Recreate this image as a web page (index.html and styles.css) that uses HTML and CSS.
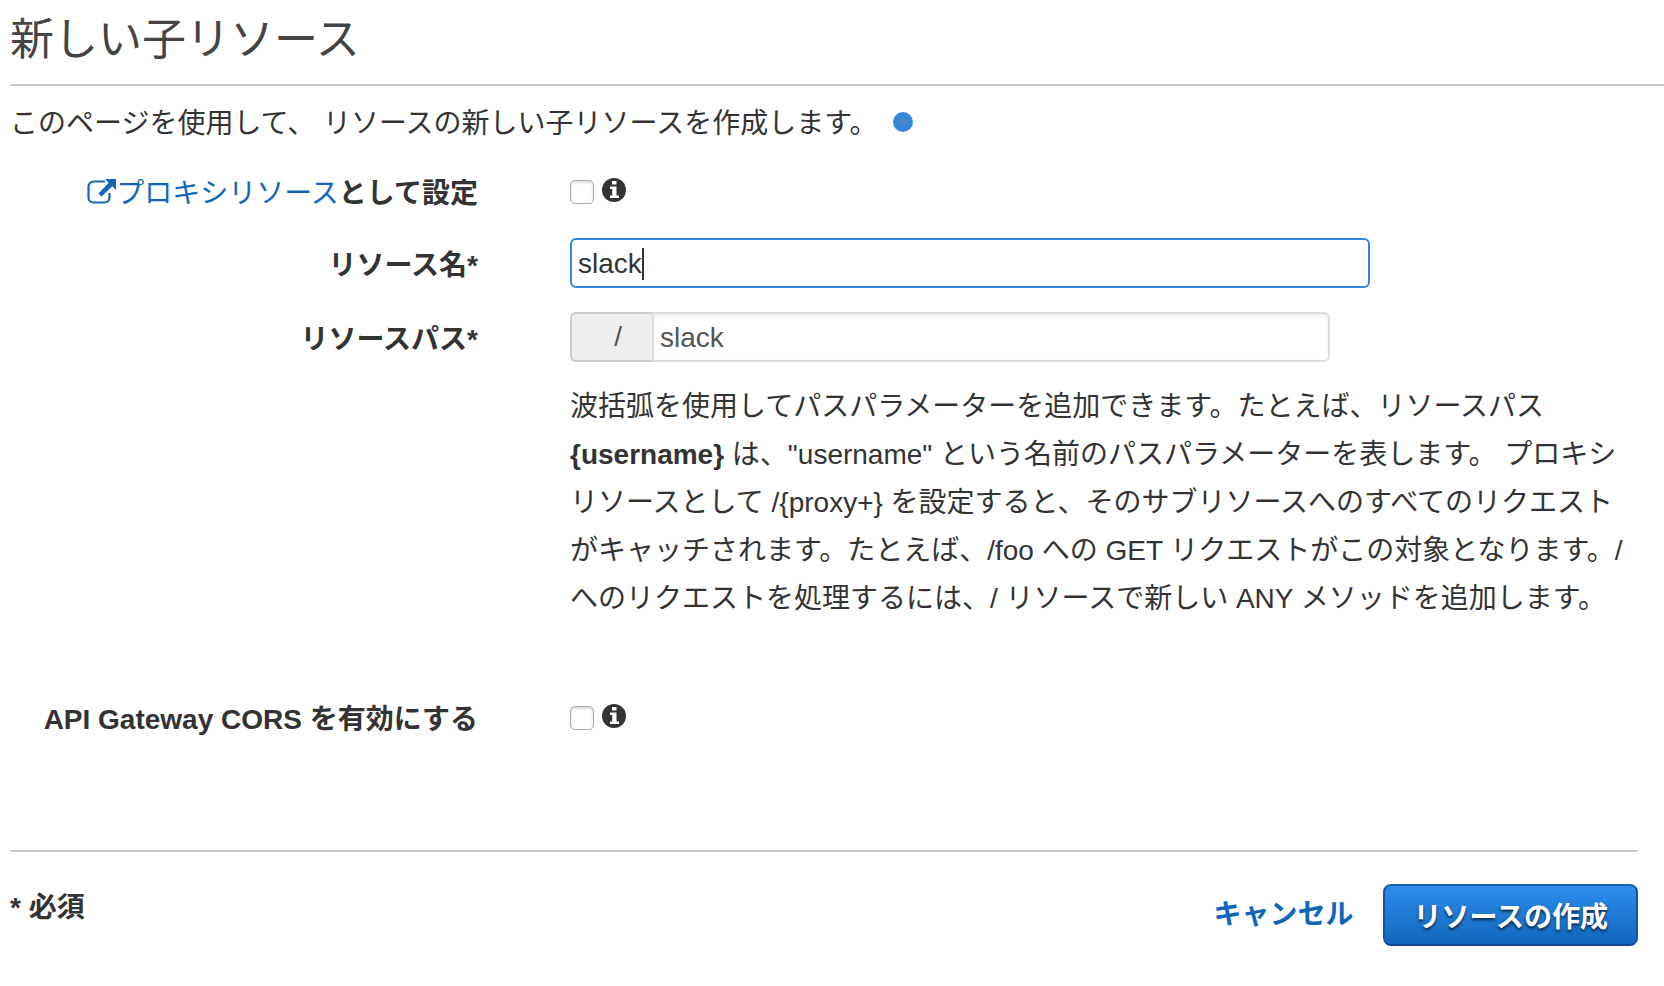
FILE: index.html
```html
<!DOCTYPE html>
<html lang="ja">

<head>
  <meta charset="UTF-8">
  <meta name="viewport" content="width=device-width, initial-scale=1.0">
  <title>新しい子リソース</title>
  <link rel="stylesheet" href="styles.css">
</head>

<body>

  <div class="container">
    <h1 class="title">新しい子リソース</h1>
    <p class="intro">このページを使用して、 リソースの新しい子リソースを作成します。 <span class="dot"></span></p>

    <form class="resource-form">
      <div class="row">
        <div class="row-label">
          <a href="#" class="link"><svg class="icon-link" viewBox="0 0 29 26"><path d="M18 3.500H6.500a5 5 0 0 0-5 5v11a5 5 0 0 0 5 5h11a5 5 0 0 0 5-5V15" fill="none" stroke="currentColor" stroke-width="2.200"/><path d="M18 1h11v11l-3.700-3.700L14.500 18.500l-3-3L21.700 4.700z" fill="currentColor"/></svg>プロキシリソース</a><label for="proxy">として設定</label>
        </div>
        <div class="row-field checks">
          <input type="checkbox" id="proxy" class="check">
          <svg class="icon-info" viewBox="0 0 24 24"><circle cx="12" cy="12" r="12" fill="#333"/><path d="M10 3h4.500v3.500H10zM8 8.500h6.500v9H17V20H8v-2.500h2.200V11H8z" fill="#fff"/></svg>
        </div>
      </div>

      <div class="row">
        <label for="rname" class="row-label">リソース名*</label>
        <div class="row-field">
          <input type="text" id="rname" name="rname" class="text-input active" value="slack">
        </div>
      </div>

      <div class="row">
        <label for="rpath" class="row-label">リソースパス*</label>
        <div class="row-field">
          <div class="path-group">
            <span class="addon">/</span>
            <input type="text" id="rpath" name="rpath" class="text-input path-input" value="slack">
          </div>
          <p class="help">波括弧を使用してパスパラメーターを追加できます。たとえば、リソースパス <strong>{username}</strong> は、"username" という名前のパスパラメーターを表します。 プロキシリソースとして /{proxy+} を設定すると、そのサブリソースへのすべてのリクエストがキャッチされます。たとえば、/foo への GET リクエストがこの対象となります。/ へのリクエストを処理するには、/ リソースで新しい ANY メソッドを追加します。</p>
        </div>
      </div>

      <div class="row">
        <label for="cors" class="row-label">API Gateway CORS を有効にする</label>
        <div class="row-field checks">
          <input type="checkbox" id="cors" class="check">
          <svg class="icon-info" viewBox="0 0 24 24"><circle cx="12" cy="12" r="12" fill="#333"/><path d="M10 3h4.500v3.500H10zM8 8.500h6.500v9H17V20H8v-2.500h2.200V11H8z" fill="#fff"/></svg>
        </div>
      </div>

      <div class="footer">
        <span class="required">* 必須</span>
        <div class="actions">
          <a href="#" class="link cancel">キャンセル</a>
          <button type="button" class="create-btn">リソースの作成</button>
        </div>
      </div>
    </form>
  </div>

</body>

</html>
```
FILE: styles.css
```css
* {
  box-sizing: border-box;
}

body {
  margin: 0;
  background-color: #fff;
  color: #333;
  font-family: "Liberation Sans", "Noto Sans CJK JP", sans-serif;
  font-size: 28px;
  line-height: 48px;
}

.container {
  padding-left: 10px;
}

.title {
  margin: 0;
  padding: 10px 0 14px;
  border-bottom: 2px solid #ccc;
  color: #444;
  font-size: 44px;
  font-weight: normal;
  line-height: 60px;
}

.intro {
  display: flex;
  align-items: center;
  gap: 16px;
  margin: 14px 0 18px;
}

.dot {
  width: 20px;
  height: 20px;
  margin-bottom: 4px;
  border-radius: 50%;
  background: radial-gradient(circle, #38d 1px, #5a87b5 2px, #5a87b5 3px, #38d 4px);
}

.resource-form {
  display: flex;
  flex-direction: column;
  gap: 24px;
  margin-right: 26px;
}

.row {
  display: grid;
  grid-template-columns: 468px 1fr;
  column-gap: 92px;
}

.row-label {
  margin-bottom: -4px;
  padding-top: 4px;
  font-weight: bold;
  text-align: right;
}

.link {
  color: #16b;
  font-weight: normal;
  text-decoration: none;
}

.icon-link {
  width: 29px;
  height: 26px;
  vertical-align: -1px;
}

.checks {
  display: flex;
  align-items: center;
  gap: 8px;
  height: 48px;
}

.check {
  appearance: none;
  width: 24px;
  height: 24px;
  margin: 4px 0 0;
  border: 1px solid #aaa;
  border-radius: 5px;
  background-color: #fff;
  box-shadow: inset 0 2px 3px #ddd;
}

.icon-info {
  width: 24px;
  height: 24px;
}

.text-input {
  display: block;
  width: 100%;
  max-width: 800px;
  height: 50px;
  padding: 2px 6px 0;
  border: 2px solid #ddd;
  border-radius: 6px;
  outline: none;
  color: #333;
  font-family: inherit;
  font-size: 28px;
}

/* focused field with the caret after the text */
.active {
  border-color: #38d;
  background: linear-gradient(#333, #333) 70px 8px / 2px 32px no-repeat;
}

.path-group {
  display: flex;
  max-width: 760px;
}

.addon {
  width: 82px;
  padding-right: 30px;
  border: 2px solid #ccc;
  border-right: none;
  border-radius: 6px 0 0 6px;
  background-color: #eee;
  color: #555;
  line-height: 46px;
  text-align: right;
}

.path-input {
  flex: 1;
  border-radius: 0 6px 6px 0;
  box-shadow: inset 0 2px 4px #eee;
  color: #555;
}

.help {
  margin: 21px 0 45px;
}

.footer {
  display: flex;
  justify-content: space-between;
  margin-top: 86px;
  padding-top: 32px;
  border-top: 2px solid #ccc;
  font-weight: bold;
}

.actions {
  display: flex;
  align-items: center;
  gap: 30px;
}

.cancel {
  font-weight: bold;
}

.create-btn {
  height: 62px;
  padding: 0 28px;
  border: 2px solid #05a;
  border-color: #16b #15a #149;
  border-radius: 8px;
  background: linear-gradient(#2e8ded, #16b);
  color: #fff;
  font-family: inherit;
  font-size: 28px;
  font-weight: bold;
  text-shadow: 0 2px 3px rgba(0, 0, 0, 0.7);
}
```
